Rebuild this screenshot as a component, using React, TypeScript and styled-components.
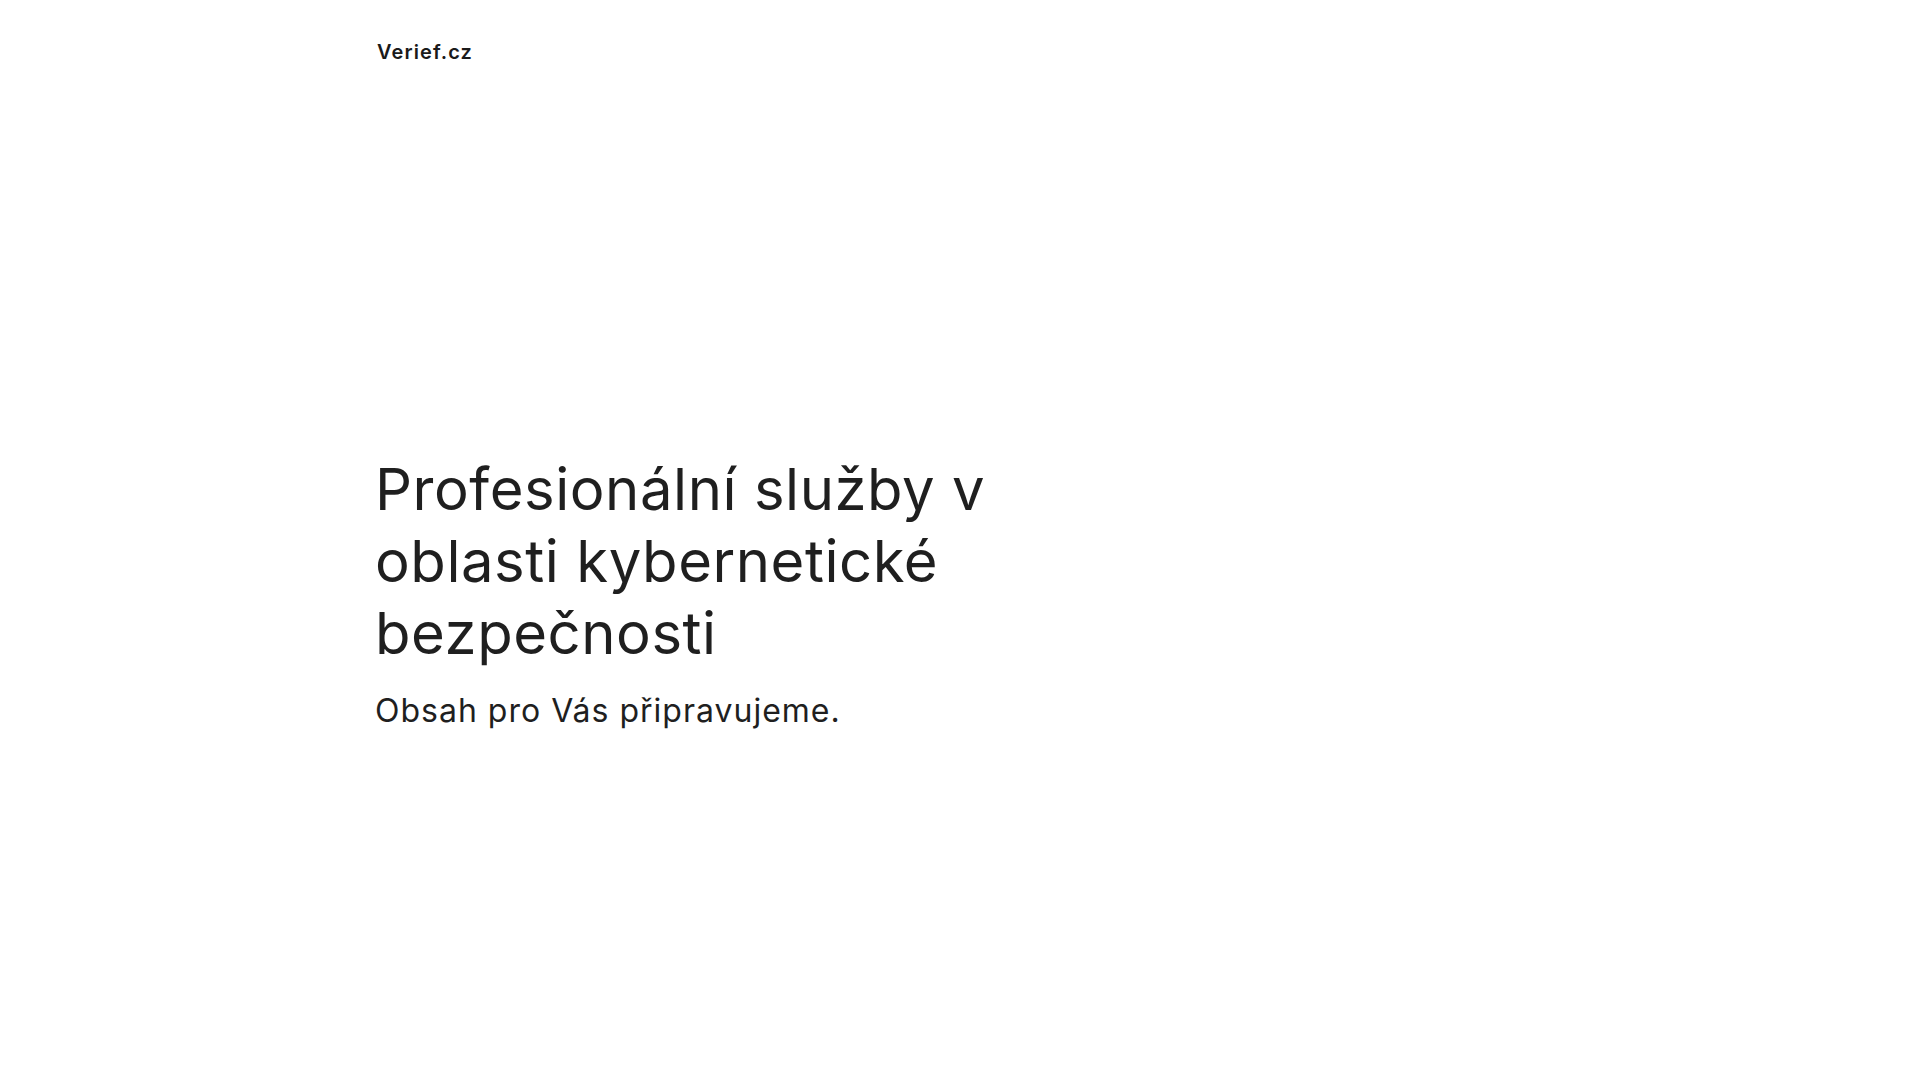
import React from 'react'
import styled, { createGlobalStyle } from 'styled-components'

const GlobalStyle = createGlobalStyle`
  html, body {
    margin: 0;
    padding: 0;
    background: #ffffff;
  }

  body {
    font-family: Inter, 'Noto Sans', sans-serif;
    color: #1f1f1f;
    -webkit-font-smoothing: antialiased;
  }
`

const Page = styled.div`
  min-height: 100vh;
  display: flex;
  flex-direction: column;
`

const Container = styled.div`
  width: 1170px;
  margin: 0 auto;
`

const Header = styled.header`
  padding-top: 40px;
`

const Logo = styled.a`
  display: inline-block;
  font-size: 20px;
  line-height: 24px;
  font-weight: 600;
  letter-spacing: 1.1px;
  color: #1a1a1a;
  text-decoration: none;
  margin-left: 2px;
`

const Hero = styled.section`
  padding-top: 389px;
`

const Title = styled.h1`
  margin: 0;
  max-width: 640px;
  font-size: 58px;
  line-height: 72px;
  font-weight: 400;
  letter-spacing: 0.55px;
  color: #1f1f1f;
`

const Lead = styled.p`
  margin: 22px 0 0;
  font-size: 32px;
  line-height: 40px;
  font-weight: 400;
  letter-spacing: 1px;
  color: #1f1f1f;
`

export default function App() {
  return (
    <>
      <GlobalStyle />
      <Page>
        <Header>
          <Container>
            <Logo href="#">Verief.cz</Logo>
          </Container>
        </Header>
        <Hero>
          <Container>
            <Title>Profesionální služby v oblasti kybernetické bezpečnosti</Title>
            <Lead>Obsah pro Vás připravujeme.</Lead>
          </Container>
        </Hero>
      </Page>
    </>
  )
}
